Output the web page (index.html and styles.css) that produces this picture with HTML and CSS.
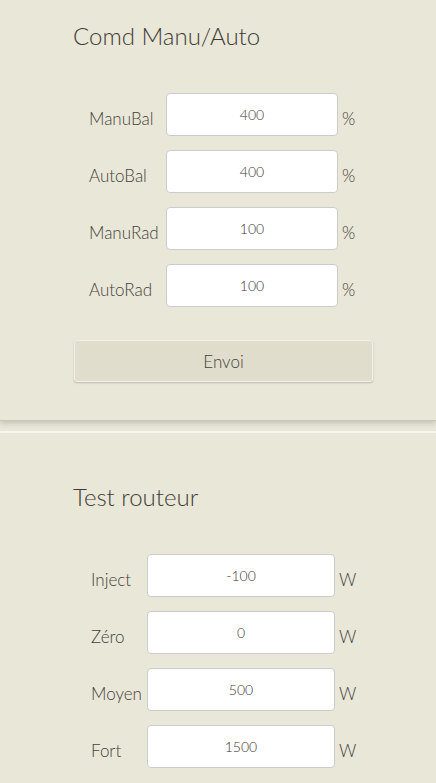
FILE: index.html
```html
<!DOCTYPE html>
<html lang="fr">
<head>
    <meta charset="utf-8" />
    <title>Routeur</title>
    <link rel="stylesheet" href="styles.css">
</head>
<body>
    <div class="panel" id="comdPanel">
        <div class="inner">
            <h2>Comd Manu/Auto</h2>
            <div class="form formPct">
                <label>ManuBal</label><input type="text" value="400"><span class="unit">%</span>
                <label>AutoBal</label><input type="text" value="400"><span class="unit">%</span>
                <label>ManuRad</label><input type="text" value="100"><span class="unit">%</span>
                <label>AutoRad</label><input type="text" value="100"><span class="unit">%</span>
            </div>
            <button class="sendButton">Envoi</button>
        </div>
    </div>
    <div class="panel" id="testPanel">
        <div class="inner">
            <h2>Test routeur</h2>
            <div class="form formW">
                <label>Inject</label><input type="text" value="-100"><span class="unit">W</span>
                <label>Zéro</label><input type="text" value="0"><span class="unit">W</span>
                <label>Moyen</label><input type="text" value="500"><span class="unit">W</span>
                <label>Fort</label><input type="text" value="1500"><span class="unit">W</span>
            </div>
        </div>
    </div>
</body>
</html>
```

FILE: styles.css
```css
body {
    margin: 0;
    background-color: #e9e7d7;
    font-family: Lato, "Open Sans", sans-serif;
    font-weight: 300;
    color: #45413c;
    overflow: hidden;
}
.panel {
    background-color: #e9e7d7;
}
#comdPanel {
    padding: 21px 0 38px;
    border-bottom: 1px solid #c9c7b8;
    box-shadow: 0 2px 6px rgba(0,0,0,0.18);
    position: relative;
    z-index: 1;
}
#testPanel {
    margin-top: 10px;
    border-top: 2px solid #f6f5ee;
    padding: 49px 0 40px;
}
.inner {
    width: 300px;
    margin-left: 73px;
}
h2 {
    margin: 0;
    font-size: 24px;
    line-height: 30px;
    font-weight: 300;
    color: #3f3c38;
}
.form {
    display: grid;
    row-gap: 14px;
    margin-top: 42px;
}
.formPct {
    grid-template-columns: 77px 172px auto;
    margin-left: 16px;
}
.formW {
    grid-template-columns: 56px 188px auto;
    margin-left: 18px;
    margin-top: 42px;
}
.form label, .form .unit {
    align-self: end;
    font-size: 17px;
    line-height: 20px;
    padding-bottom: 7px;
}
.form .unit {
    padding-left: 4px;
}
.form input {
    box-sizing: border-box;
    width: 100%;
    height: 43px;
    margin: 0;
    border: 1px solid #cbcbcb;
    border-radius: 4px;
    background: #fff;
    text-align: center;
    font-family: inherit;
    font-weight: 300;
    font-size: 14px;
    color: #3a3733;
}
.sendButton {
    display: block;
    box-sizing: border-box;
    width: 299px;
    height: 42px;
    margin: 33px 0 0 1px;
    background-color: #e0ddcd;
    border: 1px solid #f2f1e9;
    border-radius: 3px;
    box-shadow: 0 1px 2px rgba(0,0,0,0.2);
    font-family: inherit;
    font-weight: 300;
    font-size: 17px;
    color: #45413c;
}
```
